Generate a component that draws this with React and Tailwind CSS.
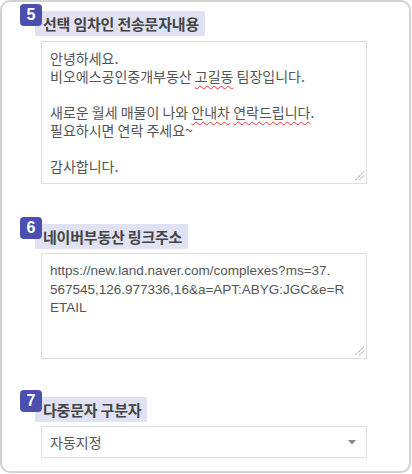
import React from "react";

const KR = { fontFamily: '"Noto Sans CJK KR", "Noto Sans", sans-serif' };

function Badge({ n }) {
  return (
    <div
      className="relative z-10 flex h-[22px] w-[22px] shrink-0 items-center justify-center rounded-[4px] bg-[#4b4fb0] text-[16px] font-bold leading-none text-white"
      style={{ fontFamily: '"Liberation Sans", Arial, sans-serif' }}
    >
      {n}
    </div>
  );
}

function Header({ n, title }) {
  return (
    <div className="flex items-start">
      <Badge n={n} />
      <div
        className="-ml-[7px] mt-[7px] flex h-[25px] items-center bg-[#e0e1f3] pl-[8px] pr-[6px] text-[15px] font-bold leading-none tracking-[-0.2px] text-[#444]"
        style={KR}
      >
        {title}
      </div>
    </div>
  );
}

function Grip() {
  return (
    <svg
      className="absolute bottom-[2px] right-[2px]"
      width="10"
      height="10"
      viewBox="0 0 10 10"
    >
      <line x1="9.5" y1="1" x2="1" y2="9.5" stroke="#555" strokeWidth="1" strokeDasharray="1 1" />
      <line x1="9.5" y1="5" x2="5" y2="9.5" stroke="#555" strokeWidth="1" strokeDasharray="1 1" />
    </svg>
  );
}

const sq = "underline decoration-wavy decoration-[#e53935] decoration-1 underline-offset-[3px]";

export default function App() {
  return (
    <div className="h-[474px] w-[412px] bg-white">
      <div className="h-[473px] w-[411px] rounded-[10px] border-2 border-[#d2d2d2] pl-[18px] pt-[2px]">
        {/* Section 5 */}
        <Header n="5" title="선택 임차인 전송문자내용" />
        <div
          className="relative ml-[21px] mt-[5px] h-[143px] w-[326px] border border-[#dedede] bg-white pl-[8px] pt-[7px] text-[14px] leading-[18px] text-[#555]"
          style={KR}
        >
          <div>안녕하세요.</div>
          <div>
            비오에스공인중개부동산 <span className={sq}>고길동</span> 팀장입니다.
          </div>
          <div>&nbsp;</div>
          <div>
            새로운 월세 매물이 나와 <span className={sq}>안내차</span>{" "}
            <span className={sq}>연락드립니다</span>.
          </div>
          <div>필요하시면 연락 주세요~</div>
          <div>&nbsp;</div>
          <div>감사합니다.</div>
          <Grip />
        </div>

        {/* Section 6 */}
        <div className="mt-[33px]">
          <Header n="6" title="네이버부동산 링크주소" />
        </div>
        <div
          className="relative ml-[21px] mt-[4px] h-[106px] w-[326px] border border-[#dedede] bg-white pl-[8px] pt-[8px] text-[13.5px] leading-[18.5px] text-[#555]"
          style={{ fontFamily: '"Liberation Sans", Arial, sans-serif' }}
        >
          <div>https://new.land.naver.com/complexes?ms=37.</div>
          <div>567545,126.977336,16&amp;a=APT:ABYG:JGC&amp;e=R</div>
          <div>ETAIL</div>
          <Grip />
        </div>

        {/* Section 7 */}
        <div className="mt-[31px]">
          <Header n="7" title="다중문자 구분자" />
        </div>
        <div
          className="ml-[21px] mt-[4px] flex h-[32px] w-[326px] items-center justify-between border border-[#dedede] bg-white pl-[8px] pr-[8px] text-[14px] text-[#555]"
          style={KR}
        >
          <span>자동지정</span>
          <svg width="8" height="5" viewBox="0 0 8 5" className="mr-[2px]">
            <polygon points="0,0 8,0 4,4.5" fill="#888" />
          </svg>
        </div>
      </div>
    </div>
  );
}
